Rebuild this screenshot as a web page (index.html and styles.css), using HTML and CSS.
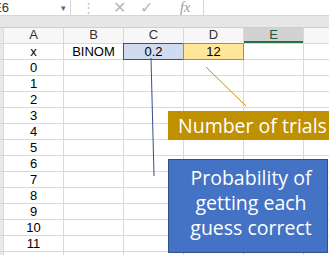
FILE: index.html
```html
<!DOCTYPE html>
<html lang="en">
<head>
    <meta charset="UTF-8">
    <title>BINOM sheet</title>
    <link rel="stylesheet" href="styles.css">
</head>
<body>
    <div class="window">
        <div class="formula-bar">
            <div class="name-box">
                <span class="name">E6</span>
                <span class="drop">&#9662;</span>
            </div>
            <span class="grip">&#8942;</span>
            <span class="fb-icon cancel">&#10005;</span>
            <span class="fb-icon enter">&#10003;</span>
            <span class="fb-icon fx"><i>fx</i></span>
            <div class="formula-input"></div>
        </div>
        <div class="strip"></div>

        <div class="sheet">
            <div class="corner"></div>
            <div class="col-head">A</div>
            <div class="col-head">B</div>
            <div class="col-head">C</div>
            <div class="col-head">D</div>
            <div class="col-head active">E</div>
            <div class="col-head"></div>

            <div class="row-head"></div>
            <div class="cell">x</div>
            <div class="cell">BINOM</div>
            <div class="cell prob">0.2</div>
            <div class="cell trials">12</div>
            <div class="cell"></div>
            <div class="cell"></div>
        </div>
        <div class="sheet" id="rows"></div>

        <svg class="connectors" width="329" height="255">
            <line x1="206" y1="67" x2="246" y2="106" stroke="#bf9000" stroke-width="1" />
            <line x1="151" y1="58" x2="154" y2="176" stroke="#2f528f" stroke-width="1" />
        </svg>

        <div class="callout trials-note">Number of trials</div>
        <div class="callout prob-note">Probability of<br>getting each<br>guess correct</div>
    </div>

    <script>
        const rows = document.getElementById("rows")
        for (let i = 0; i <= 12; i++)
        {
            let html = '<div class="row-head"></div><div class="cell">' + i + '</div>'
            for (let c = 0; c < 5; c++) html += '<div class="cell"></div>'
            rows.innerHTML += html
        }
    </script>
</body>
</html>
```

FILE: styles.css
```css
body {
    margin: 0;
    font-family: "Liberation Sans", Arial, sans-serif;
    background: #fff;
}

.window {
    position: relative;
    width: 329px;
    height: 255px;
    overflow: hidden;
}

/* formula bar */
.formula-bar {
    display: flex;
    align-items: center;
    height: 15px;
    border-bottom: 1px solid #d6d6d6;
    background: #fff;
    color: #a6a6a6;
}

.name-box {
    display: flex;
    align-items: center;
    justify-content: space-between;
    width: 78px;
    height: 15px;
    margin-left: -7px;
    padding-right: 4px;
    box-sizing: border-box;
    border-right: 1px solid #d6d6d6;
}

.name {
    font-size: 13px;
    color: #333;
}

.drop {
    font-size: 9px;
    color: #666;
}

.grip {
    margin-left: 11px;
    font-size: 13px;
    color: #c8c8c8;
}

.fb-icon {
    font-size: 16px;
    line-height: 15px;
    color: #b8b8b8;
}

.cancel {
    margin-left: 18px;
}

.enter {
    margin-left: 14px;
}

.fx {
    margin-left: 27px;
    font-family: "Liberation Serif", serif;
    font-size: 14px;
    color: #9a9a9a;
}

.formula-input {
    flex: 1;
    height: 15px;
    margin-left: 13px;
    border-left: 1px solid #d6d6d6;
}

.strip {
    height: 11px;
    background: #e6e6e6;
    border-bottom: 1px solid #cfcfcf;
}

/* grid */
.sheet {
    display: grid;
    grid-template-columns: 3px repeat(6, 59px);
    grid-auto-rows: 15px;
    gap: 1px;
    background: #d9d9d9;
    border-bottom: 1px solid #d9d9d9;
}

.sheet:first-of-type {
    grid-template-rows: 12px 15px;
}

.corner,
.row-head {
    background: #e9e9e9;
}

.col-head {
    background: #f7f7f7;
    color: #333;
    font-size: 13px;
    line-height: 13px;
    text-align: center;
}

.col-head.active {
    background: #d2d2d2;
    color: #1e5b3a;
    box-shadow: inset 0 -2px 0 #217346;
}

.cell {
    background: #fff;
    color: #000;
    font-size: 13px;
    line-height: 15px;
    text-align: center;
}

.cell.prob {
    background: #d0dbef;
    box-shadow: 0 0 0 1px #2f528f;
}

.cell.trials {
    background: #ffe699;
    box-shadow: 0 0 0 1px #bf9000;
}

/* callouts */
.connectors {
    position: absolute;
    top: 0;
    left: 0;
}

.callout {
    position: absolute;
    color: #fff;
    font-family: "Open Sans", sans-serif;
    font-size: 19.5px;
}

.trials-note {
    left: 168px;
    top: 111px;
    width: 180px;
    height: 29px;
    padding-left: 10px;
    line-height: 29px;
    background: #bf9000;
}

.prob-note {
    left: 168px;
    top: 159px;
    width: 152px;
    height: 87px;
    padding: 5px 0 0 6px;
    line-height: 25px;
    text-align: center;
    background: #4472c4;
    border: 1px solid #2f528f;
}
```
